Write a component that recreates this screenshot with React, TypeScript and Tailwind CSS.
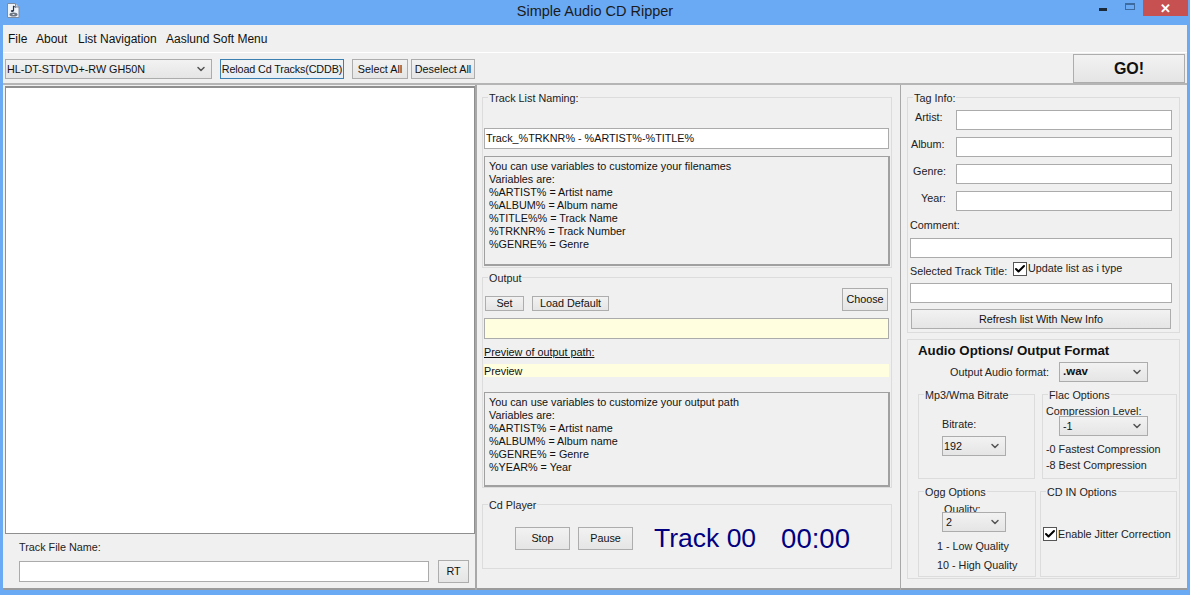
import type { ReactNode } from 'react';
import { ChevronDown, Check } from 'lucide-react';

const font = { fontFamily: '"Liberation Sans", Arial, sans-serif' };

const Btn = ({ className = '', children }: { className?: string; children: ReactNode }) => (
    <button className={`flex items-center justify-center whitespace-nowrap border border-[#adadad] bg-gradient-to-b from-[#f2f2f2] to-[#e5e5e5] text-[#111] leading-none ${className}`}>
        {children}
    </button>
);

const Input = ({ className = '', value = '' }: { className?: string; value?: string }) => (
    <input readOnly value={value} className={`block border border-[#ababab] bg-white px-[1px] pb-[1px] text-[#111] outline-none ${className}`} />
);

const Select = ({ className = '', value, bold = false }: { className?: string; value: string; bold?: boolean }) => (
    <div className={`relative flex items-center border border-[#acacac] bg-gradient-to-b from-[#f2f2f2] to-[#e5e5e5] pl-[1px] text-[#111] ${className}`}>
        <select defaultValue={value} className={`w-full appearance-none bg-transparent outline-none ${bold ? 'text-[11.500px] font-bold' : ''}`}>
            <option>{value}</option>
        </select>
        <ChevronDown size={12} strokeWidth={3} className="pointer-events-none absolute right-[4px] top-1/2 -translate-y-1/2 text-[#555]" />
    </div>
);

const Group = ({ label, className = '', children }: { label: string; className?: string; children?: ReactNode }) => (
    <div className={`relative border border-[#dcdcdc] ${className}`}>
        <span className="absolute left-[5px] top-[-7px] bg-[#f0f0f0] px-[1px] leading-[14px] text-[#222]">{label}</span>
        {children}
    </div>
);

const Tick = ({ className = '' }: { className?: string }) => (
    <span className={`flex h-[14px] w-[14px] shrink-0 items-center justify-center border border-[#555] bg-white ${className}`}>
        <Check size={12} strokeWidth={4} className="text-black" />
    </span>
);

const InfoBox = ({ lines, className = '' }: { lines: string[]; className?: string }) => (
    <div className={`border-2 border-t-[1px] border-l-[1px] border-[#a0a0a0] pl-[4px] pt-[3px] leading-[13px] text-[#111] ${className}`}>
        {lines.map((l) => (
            <div key={l}>{l}</div>
        ))}
    </div>
);

const TagRow = ({ label, pad }: { label: string; pad: string }) => (
    <div className="flex h-[27px] items-start">
        <div className={`h-[20px] w-[46px] shrink-0 leading-[15px] text-[#222] ${pad}`}>{label}</div>
        <Input className="h-[20px] w-[216px]" />
    </div>
);

export default function App() {
    return (
        <div className="flex h-[595px] w-[1190px] flex-col overflow-hidden bg-[#6aa9f4] text-[10.800px]" style={font}>
            {/* title bar */}
            <div className="relative flex h-[25px] shrink-0 items-start justify-center pt-[3px] text-[14.500px] leading-[17px] text-[#1b1b1b]">
                <svg className="absolute left-[7px] top-[3px]" width="13" height="15" viewBox="0 0 13 15">
                    <path d="M.5 .5h8l3.500 3.500v10.500h-11.500z" fill="#eef3fa" stroke="#7d8ba0" />
                    <path d="M8.500 .5v3.500h3.500" fill="#c9d6e6" stroke="#7d8ba0" />
                    <path d="M6.500 3v5" stroke="#26324a" strokeWidth="1.200" />
                    <path d="M6.500 3l2 1.500" stroke="#26324a" />
                    <ellipse cx="5.300" cy="8" rx="1.500" ry="1" fill="#26324a" />
                    <ellipse cx="6.500" cy="11.500" rx="4" ry="2" fill="#6d7684" />
                    <ellipse cx="6.500" cy="11.500" rx="1.200" ry=".6" fill="#e8edf4" />
                </svg>
                Simple Audio CD Ripper
                <div className="absolute right-[2px] top-0 flex items-start">
                    <div className="mr-[18px] mt-[8px] h-[3px] w-[8px] bg-[#1a2a3a]" />
                    <div className="mr-[8px] mt-[3px] h-[7px] w-[10px] border border-t-2 border-[#3d6a9f]" />
                    <div className="flex h-[16px] w-[45px] items-center justify-center bg-[#c75050] text-[13px] font-bold leading-none text-white">✕</div>
                </div>
            </div>

            {/* window */}
            <div className="mx-[3px] h-[565px] shrink-0 border-b-2 border-[#9b9b9b] bg-[#f0f0f0]">
                <div className="flex h-[27px] items-center pl-[5px] text-[12px] text-[#111]">
                    <span className="w-[28px]">File</span>
                    <span className="w-[42px]">About</span>
                    <span className="w-[88px]">List Navigation</span>
                    <span>Aaslund Soft Menu</span>
                </div>
                <div className="flex h-[33px] items-start border-t border-white border-b-2 border-b-[#b5b5b5] pl-[2px] pt-[6px]">
                    <Select value="HL-DT-STDVD+-RW GH50N" className="h-[20px] w-[207px]" />
                    <Btn className="ml-[8px] h-[20px] w-[124px] !border-[#3c7fb1] from-[#f0f4f8] to-[#e6eef5] tracking-[-0.15px]">Reload Cd Tracks(CDDB)</Btn>
                    <Btn className="ml-[8px] h-[20px] w-[56px]">Select All</Btn>
                    <Btn className="ml-[3px] h-[20px] w-[64px]">Deselect All</Btn>
                    <Btn className="ml-auto mr-[2px] mt-[-5px] h-[29px] w-[112px] text-[16px] font-bold">GO!</Btn>
                </div>

                <div className="flex">
                    {/* track list */}
                    <div className="w-[474px] shrink-0 border-r-2 border-[#a8a8a8] pl-[2px] pt-[1px]">
                        <div className="h-[448px] w-[470px] border border-t-2 border-[#8f8f8f] bg-white" />
                        <div className="h-[56px] pl-[14px] pt-[7px]">
                            <div className="h-[19px] leading-[13px] text-[#222]">Track File Name:</div>
                            <div className="flex items-center">
                                <Input className="h-[21px] w-[410px]" />
                                <Btn className="ml-[9px] h-[23px] w-[31px]">RT</Btn>
                            </div>
                        </div>
                    </div>

                    {/* naming / output / player */}
                    <div className="w-[424px] shrink-0 border-r border-[#a8a8a8] pl-[5px] pt-[12px]">
                        <Group label="Track List Naming:" className="h-[171px] w-[410px]">
                            <Input value="Track_%TRKNR% - %ARTIST%-%TITLE%" className="ml-[1px] mt-[30px] h-[21px] w-[405px]" />
                            <InfoBox
                                className="ml-[1px] mt-[7px] h-[110px] w-[406px]"
                                lines={[
                                    'You can use variables to customize your filenames',
                                    'Variables are:',
                                    '%ARTIST% = Artist name',
                                    '%ALBUM% = Album name',
                                    '%TITLE%% = Track Name',
                                    '%TRKNR% = Track Number',
                                    '%GENRE% = Genre',
                                ]}
                            />
                        </Group>
                        <Group label="Output" className="mt-[9px] h-[211px] w-[410px]">
                            <div className="flex items-end pl-[2px] pr-[3px] pt-[10px]">
                                <Btn className="h-[15px] w-[39px]">Set</Btn>
                                <Btn className="ml-[8px] h-[15px] w-[77px]">Load Default</Btn>
                                <Btn className="ml-auto h-[23px] w-[46px]">Choose</Btn>
                            </div>
                            <Input className="ml-[1px] mt-[7px] h-[21px] w-[405px] !bg-[#ffffe0]" />
                            <div className="ml-[1px] mt-[6px] h-[19px] leading-[14px] text-[#111] underline">Preview of output path:</div>
                            <div className="ml-[1px] h-[13px] w-[405px] bg-[#ffffe0] leading-[14px] text-[#111]">Preview</div>
                            <InfoBox
                                className="ml-[1px] mt-[15px] h-[95px] w-[406px]"
                                lines={[
                                    'You can use variables to customize your output path',
                                    'Variables are:',
                                    '%ARTIST% = Artist name',
                                    '%ALBUM% = Album name',
                                    '%GENRE% = Genre',
                                    '%YEAR% = Year',
                                ]}
                            />
                        </Group>
                        <Group label="Cd Player" className="mt-[16px] h-[65px] w-[410px]">
                            <div className="flex items-center pl-[32px] pt-[22px]">
                                <Btn className="h-[23px] w-[55px]">Stop</Btn>
                                <Btn className="ml-[8px] h-[23px] w-[55px]">Pause</Btn>
                                <span className="ml-[21px] text-[26.500px] leading-[23px] text-[#000080]">Track 00</span>
                                <span className="ml-[25px] text-[27.500px] leading-[23px] text-[#000080]">00:00</span>
                            </div>
                        </Group>
                    </div>

                    {/* tags / audio */}
                    <div className="flex-1 pl-[6px] pt-[12px]">
                        <Group label="Tag Info:" className="h-[236px] w-[273px] pl-[2px] pt-[12px]">
                            <TagRow label="Artist:" pad="pl-[5px]" />
                            <TagRow label="Album:" pad="pl-[1px]" />
                            <TagRow label="Genre:" pad="pl-[3px]" />
                            <TagRow label="Year:" pad="pl-[11px]" />
                            <div className="h-[20px] leading-[14px] text-[#222]">Comment:</div>
                            <Input className="h-[20px] w-[262px]" />
                            <div className="mt-[4px] flex h-[21px] items-start">
                                <span className="mt-[1px] w-[97px] whitespace-nowrap text-[#222]">Selected Track Title:</span>
                                <Tick className="ml-[6px]" />
                                <span className="ml-[1px] leading-[13px] text-[#222]">Update list as i type</span>
                            </div>
                            <Input className="h-[20px] w-[262px]" />
                            <Btn className="ml-[1px] mt-[6px] h-[20px] w-[260px]">Refresh list With New Info</Btn>
                        </Group>

                        <div className="mt-[6px] h-[240px] w-[273px] border border-[#dcdcdc] pl-[10px] pr-[2px] pt-[3px]">
                            <div className="h-[15px] whitespace-nowrap text-[13.300px] font-bold leading-[15px] text-[#111]">Audio Options/ Output Format</div>
                            <div className="mt-[4px] flex h-[20px] items-center pl-[32px]">
                                <span className="w-[109px] whitespace-nowrap text-[#222]">Output Audio format:</span>
                                <Select value=".wav" bold className="h-[20px] w-[89px] pl-[3px]" />
                            </div>
                            <div className="mt-[12px] flex justify-between">
                                <Group label="Mp3/Wma Bitrate" className="h-[85px] w-[117px] pl-[23px] pt-[21px]">
                                    <div className="h-[20px] leading-[16px] text-[#222]">Bitrate:</div>
                                    <Select value="192" className="h-[20px] w-[64px]" />
                                </Group>
                                <Group label="Flac Options" className="h-[85px] w-[135px] pl-[3px] pt-[9px]">
                                    <div className="h-[12px] leading-[14px] text-[#222]">Compression Level:</div>
                                    <Select value="-1" className="ml-[13px] h-[20px] w-[89px] pl-[3px]" />
                                    <div className="mt-[5px] h-[16px] leading-[16px] text-[#222]">-0 Fastest Compression</div>
                                    <div className="h-[16px] leading-[16px] text-[#222]">-8 Best Compression</div>
                                </Group>
                            </div>
                            <div className="mt-[12px] flex justify-between">
                                <Group label="Ogg Options" className="h-[86px] w-[118px] pt-[11px]">
                                    <div className="ml-[25px] h-[9px] leading-[12px] text-[#222]">Quality:</div>
                                    <Select value="2" className="ml-[23px] h-[20px] w-[64px] pl-[3px]" />
                                    <div className="ml-[18px] mt-[6px] h-[19px] leading-[16px] text-[#222]">1 - Low Quality</div>
                                    <div className="ml-[18px] leading-[16px] text-[#222]">10 - High Quality</div>
                                </Group>
                                <Group label="CD IN Options" className="h-[86px] w-[137px] pl-[2px] pt-[34px]">
                                    <div className="flex items-center whitespace-nowrap text-[#222]">
                                        <Tick />
                                        <span className="ml-[1px]">Enable Jitter Correction</span>
                                    </div>
                                </Group>
                            </div>
                        </div>
                    </div>
                </div>
            </div>
        </div>
    );
}
